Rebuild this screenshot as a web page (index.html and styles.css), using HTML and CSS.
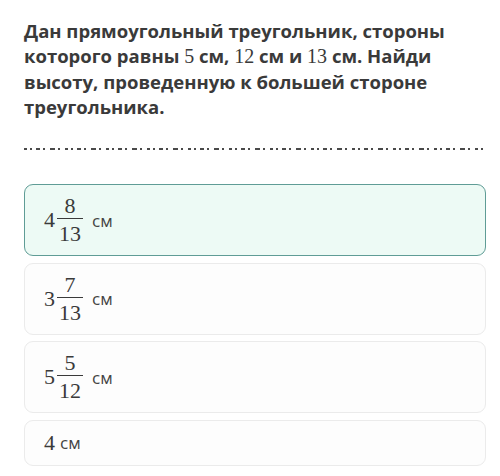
FILE: index.html
```html
<!DOCTYPE html>
<html lang="ru">
<head>
<meta charset="utf-8">
<link rel="stylesheet" href="styles.css">
</head>
<body>
<div class="page">
  <p class="question">Дан прямоугольный треугольник, стороны которого равны <span class="m">5</span> см, <span class="m">12</span> см и <span class="m">13</span> см. Найди высоту, проведенную к большей стороне треугольника.</p>
  <div class="cut"></div>
  <div class="options">
    <div class="option selected">
      <span class="whole">4</span>
      <span class="frac"><span class="num">8</span><span class="den">13</span></span>
      <span class="unit">см</span>
    </div>
    <div class="option">
      <span class="whole">3</span>
      <span class="frac"><span class="num">7</span><span class="den">13</span></span>
      <span class="unit">см</span>
    </div>
    <div class="option">
      <span class="whole">5</span>
      <span class="frac"><span class="num">5</span><span class="den">12</span></span>
      <span class="unit">см</span>
    </div>
    <div class="option short">
      <span class="whole">4</span>
      <span class="unit">см</span>
    </div>
  </div>
</div>
</body>
</html>
```
FILE: styles.css
```css
html, body {
  margin: 0;
  padding: 0;
  background: #ffffff;
}
.page {
  padding: 18px 14px 0 24px;
}
.question {
  margin: 0;
  font-family: "Open Sans", "Noto Sans", sans-serif;
  font-weight: 700;
  font-size: 18.5px;
  line-height: 25px;
  color: #3a3a3a;
}
.m {
  font-family: "Liberation Serif", serif;
  font-weight: 400;
  font-size: 20px;
}
.cut {
  margin-top: 29px;
  height: 2px;
  width: 460px;
  background: repeating-linear-gradient(90deg, #4a4a4a 0 3px, transparent 3px 6px, #4a4a4a 6px 8px, transparent 8px 12px, #4a4a4a 12px 16px, transparent 16px 19px, #4a4a4a 19px 21px, transparent 21px 26px, #4a4a4a 26px 31px, transparent 31px 34px, #4a4a4a 34px 36px, transparent 36px 41px);
}
.options {
  margin-top: 34px;
  display: flex;
  flex-direction: column;
  gap: 6.5px;
}
.option {
  box-sizing: border-box;
  height: 72px;
  width: 462px;
  border: 1.5px solid #ebebeb;
  border-radius: 9px;
  background: #fdfdfd;
  display: flex;
  align-items: center;
  padding-left: 19px;
  color: #3a3a3a;
}
.option.selected {
  border-color: #5f9c96;
  background: #edfaf5;
}
.option.short {
  height: 46px;
}
.whole {
  font-family: "Liberation Serif", serif;
  font-size: 22px;
  line-height: 16px;
}
.frac {
  display: inline-flex;
  flex-direction: column;
  align-items: center;
  font-family: "Liberation Serif", serif;
  font-size: 22px;
  line-height: 16px;
  margin-left: 2px;
}
.num {
  padding: 0 2px 4px;
}
.den {
  border-top: 1.5px solid #3a3a3a;
  padding: 7px 2px 0;
}
.unit {
  font-family: "Open Sans", "Noto Sans", sans-serif;
  font-size: 17px;
  margin-left: 9px;
  color: #444;
}
.short .unit {
  margin-left: 5px;
}
```
